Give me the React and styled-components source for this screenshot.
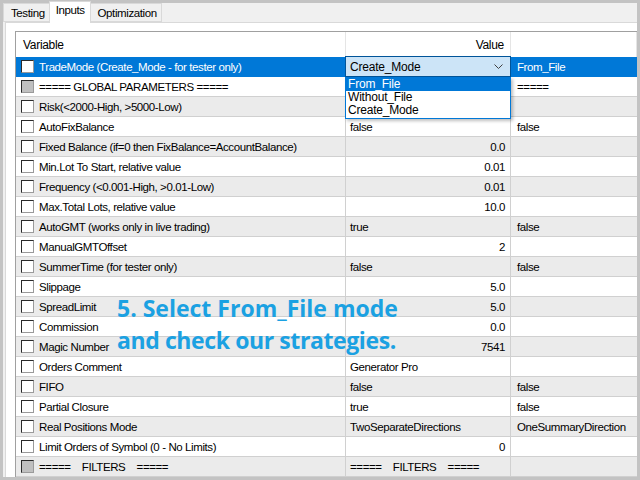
import React from 'react';
import styled, { createGlobalStyle } from 'styled-components';

const GlobalStyle = createGlobalStyle`
  * {
    box-sizing: border-box;
  }
  body {
    margin: 0;
    background: #c3c3c3;
    font-family: 'Liberation Sans', Arial, sans-serif;
  }
`;

const rows = [
  { name: 'TradeMode (Create_Mode - for tester only)', combo: true, extra: 'From_File', selected: true },
  { name: '===== GLOBAL PARAMETERS =====', group: true, extra: '=====' },
  { name: 'Risk(<2000-High, >5000-Low)' },
  { name: 'AutoFixBalance', value: 'false', extra: 'false' },
  { name: 'Fixed Balance (if=0 then FixBalance=AccountBalance)', value: '0.0', num: true },
  { name: 'Min.Lot To Start, relative value', value: '0.01', num: true },
  { name: 'Frequency (<0.001-High, >0.01-Low)', value: '0.01', num: true },
  { name: 'Max.Total Lots, relative value', value: '10.0', num: true },
  { name: 'AutoGMT (works only in live trading)', value: 'true', extra: 'false' },
  { name: 'ManualGMTOffset', value: '2', num: true },
  { name: 'SummerTime (for tester only)', value: 'false', extra: 'false' },
  { name: 'Slippage', value: '5.0', num: true },
  { name: 'SpreadLimit', value: '5.0', num: true },
  { name: 'Commission', value: '0.0', num: true },
  { name: 'Magic Number', value: '7541', num: true },
  { name: 'Orders Comment', value: 'Generator Pro' },
  { name: 'FIFO', value: 'false', extra: 'false' },
  { name: 'Partial Closure', value: 'true', extra: 'false' },
  { name: 'Real Positions Mode', value: 'TwoSeparateDirections', extra: 'OneSummaryDirection' },
  { name: 'Limit Orders of Symbol (0 - No Limits)', value: '0', num: true },
  { name: '=====    FILTERS    =====', group: true, value: '=====    FILTERS    =====' },
];

function App() {
  return (
    <>
      <GlobalStyle />
      <Window>
        <Inner>
          <TabStrip>
            <Tab>Testing</Tab>
            <Tab active>Inputs</Tab>
            <Tab>Optimization</Tab>
          </TabStrip>
          <Panel>
            <Grid>
              <HeaderRow>
                <HeadCell>Variable</HeadCell>
                <HeadCell right>Value</HeadCell>
                <HeadCell />
              </HeaderRow>
              {rows.map((r, i) => (
                <Row key={i} shaded={i % 2 === 0} selected={r.selected}>
                  <NameCell>
                    <CheckBox group={r.group} />
                    <span>{r.name}</span>
                  </NameCell>
                  <Cell right={r.num}>
                    {r.combo ? (
                      <Combo>
                        <ComboBox>
                          <span>Create_Mode</span>
                          <svg width="9" height="6" viewBox="0 0 9 6">
                            <path d="M0.5 0.5 L4.5 4.5 L8.5 0.5" fill="none" stroke="#404040" strokeWidth="1" />
                          </svg>
                        </ComboBox>
                        <DropList>
                          <DropItem active>From_File</DropItem>
                          <DropItem>Without_File</DropItem>
                          <DropItem>Create_Mode</DropItem>
                        </DropList>
                      </Combo>
                    ) : (
                      r.value
                    )}
                  </Cell>
                  <Cell last>{r.extra}</Cell>
                </Row>
              ))}
            </Grid>
          </Panel>
        </Inner>
        <Caption>
          <CaptionLine>5. Select From_File mode</CaptionLine>
          <CaptionLine tight>and check our strategies.</CaptionLine>
        </Caption>
      </Window>
    </>
  );
}

const Window = styled.div`
  position: relative;
  width: 640px;
  height: 480px;
  padding: 3px;
  background: #c3c3c3;
  overflow: hidden;
  font-size: 11.5px;
  letter-spacing: -0.4px;
  color: #000;
`;

const Inner = styled.div`
  display: flex;
  flex-direction: column;
  height: 100%;
  background: #f0f0f0;
  padding-left: 2px;
`;

const TabStrip = styled.div`
  display: flex;
  align-items: flex-end;
  height: 19px;
  margin-left: -2px;
`;

const Tab = styled.div`
  height: ${(p) => (p.active ? '22px' : '19px')};
  margin-bottom: ${(p) => (p.active ? '-1px' : '0')};
  padding: ${(p) => (p.active ? '1px 5px 0 6px' : '2px 4px 0 7px')};
  background: ${(p) => (p.active ? '#ffffff' : '#f0f0f0')};
  border: 1px solid #d9d9d9;
  border-bottom: ${(p) => (p.active ? 'none' : '1px solid #d9d9d9')};
  margin-right: -1px;
  font-size: 11.5px;
  letter-spacing: -0.4px;
  line-height: 15px;
  position: relative;
  z-index: ${(p) => (p.active ? 2 : 1)};
`;

const Panel = styled.div`
  flex: 1;
  background: #ffffff;
  border-top: 1px solid #d9d9d9;
  border-left: 1px solid #d9d9d9;
  padding: 8px 0 0 9px;
  overflow: hidden;
`;

const Grid = styled.div`
  border-top: 1px solid #a0a0a0;
  border-left: 1px solid #a0a0a0;
  height: 446px;
`;

const HeaderRow = styled.div`
  display: grid;
  grid-template-columns: 330px 165px 1fr;
  height: 25px;
  background: #fff;
`;

const HeadCell = styled.div`
  display: flex;
  align-items: center;
  justify-content: ${(p) => (p.right ? 'flex-end' : 'flex-start')};
  padding: 1px ${(p) => (p.right ? '6px' : '0')} 0 7px;
  border-right: 1px solid #e5e5e5;
  font-size: 12px;
  letter-spacing: -0.3px;
`;

const Row = styled.div`
  display: grid;
  grid-template-columns: 330px 165px 1fr;
  height: 20px;
  background: ${(p) => (p.selected ? '#0078d7' : p.shaded ? '#ebebeb' : '#ffffff')};
  color: ${(p) => (p.selected ? '#ffffff' : '#000000')};
  border-bottom: 1px solid ${(p) => (p.selected ? '#0078d7' : '#d0d0d0')};
`;

const Cell = styled.div`
  position: relative;
  display: flex;
  align-items: center;
  justify-content: ${(p) => (p.right ? 'flex-end' : 'flex-start')};
  padding: 0 5px 0 ${(p) => (p.last ? '6px' : '4px')};
  border-right: 1px solid ${(p) => (p.last ? 'transparent' : '#d0d0d0')};
  white-space: pre;
`;

const NameCell = styled(Cell)`
  padding-left: 5px;
  gap: 5px;
`;

const CheckBox = styled.span`
  width: 13px;
  height: 13px;
  flex: none;
  background: ${(p) => (p.group ? '#c0c0c0' : '#ffffff')};
  border-top: 1px solid #2a2a2a;
  border-left: 1px solid #2a2a2a;
  border-right: 1px solid #9a9a9a;
  border-bottom: 1px solid #9a9a9a;
`;

const Combo = styled.div`
  position: absolute;
  left: -1px;
  top: -1px;
  width: 166px;
  z-index: 5;
`;

const ComboBox = styled.div`
  height: 21px;
  display: flex;
  align-items: center;
  justify-content: space-between;
  padding: 1px 7px 0 4px;
  background: #cce4f7;
  border: 1px solid #005499;
  color: #000;
  font-size: 12px;
  letter-spacing: -0.2px;
`;

const DropList = styled.div`
  background: #ffffff;
  border: 1px solid #0078d7;
  padding: 0 0 1px;
  box-shadow: 2px 2px 3px rgba(0, 0, 0, 0.25);
`;

const DropItem = styled.div`
  height: 13px;
  line-height: 13px;
  padding-left: 2px;
  font-size: 12px;
  letter-spacing: -0.2px;
  background: ${(p) => (p.active ? '#0078d7' : '#ffffff')};
  color: ${(p) => (p.active ? '#ffffff' : '#000000')};
`;

const Caption = styled.div`
  position: absolute;
  left: 117px;
  top: 292px;
  font-family: 'Open Sans', sans-serif;
  font-weight: 700;
  font-size: 23px;
  line-height: 32px;
  color: #1ba1e2;
  white-space: nowrap;
`;

const CaptionLine = styled.div`
  letter-spacing: ${(p) => (p.tight ? '-0.4px' : '0')};
`;

export default App;
